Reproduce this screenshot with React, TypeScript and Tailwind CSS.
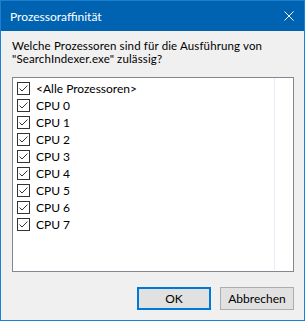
import React from "react";

const font = { fontFamily: "Lato, 'Liberation Sans', sans-serif" };

function Check() {
  return (
    <span className="flex h-[13px] w-[13px] shrink-0 items-center justify-center border border-[#333333] bg-white">
      <svg width="11" height="11" viewBox="0 0 11 11">
        <polyline points="1.5,5.5 4,8 9.5,2.5" fill="none" stroke="#333333" strokeWidth="1" />
      </svg>
    </span>
  );
}

const rows = [
  "<Alle Prozessoren>",
  "CPU 0",
  "CPU 1",
  "CPU 2",
  "CPU 3",
  "CPU 4",
  "CPU 5",
  "CPU 6",
  "CPU 7",
];

export default function App() {
  return (
    <div
      className="flex h-[321px] w-[305px] flex-col border border-[#1c7fd1] bg-[#f0f0f0] text-[12px] text-black"
      style={font}
    >
      <div className="flex h-[30px] shrink-0 items-center justify-between bg-[#0063b1] pl-[9px] pr-[10px] text-white">
        <span className="text-[12px] leading-[15px]">Prozessoraffinität</span>
        <svg width="10" height="10" viewBox="0 0 10 10">
          <path d="M0.5 0.5 L9.5 9.5 M9.5 0.5 L0.5 9.5" stroke="#ffffff" strokeWidth="1" />
        </svg>
      </div>
      <div className="flex flex-1 flex-col pl-[11px] pr-[10px] pt-[8px] pb-[10px]">
        <div className="flex flex-col">
          <div className="h-[13px] text-[11.5px] leading-[13px] tracking-[0.13px]">Welche Prozessoren sind für die Ausführung von</div>
          <div className="h-[13px] text-[11.5px] leading-[13px] tracking-[0.13px]">"SearchIndexer.exe" zulässig?</div>
        </div>
        <div className="mt-[12px] flex h-[195px] border border-[#828790] bg-white">
          <div className="flex w-[261px] flex-col pt-[2px]">
            {rows.map((r) => (
              <div key={r} className="flex h-[17px] items-center pl-[4px]">
                <Check />
                <span className="ml-[6px] leading-[17px]">{r}</span>
              </div>
            ))}
          </div>
          <div className="mb-[1px] w-px bg-[#e8eef6]" />
        </div>
        <div className="mt-[15px] flex justify-end gap-[9px]">
          <button className="h-[23px] w-[74px] border-2 border-[#0078d7] bg-[#e1e1e1] text-[12px]">
            OK
          </button>
          <button className="h-[23px] w-[74px] border border-[#adadad] bg-[#e1e1e1] text-[12px]">
            Abbrechen
          </button>
        </div>
      </div>
    </div>
  );
}
